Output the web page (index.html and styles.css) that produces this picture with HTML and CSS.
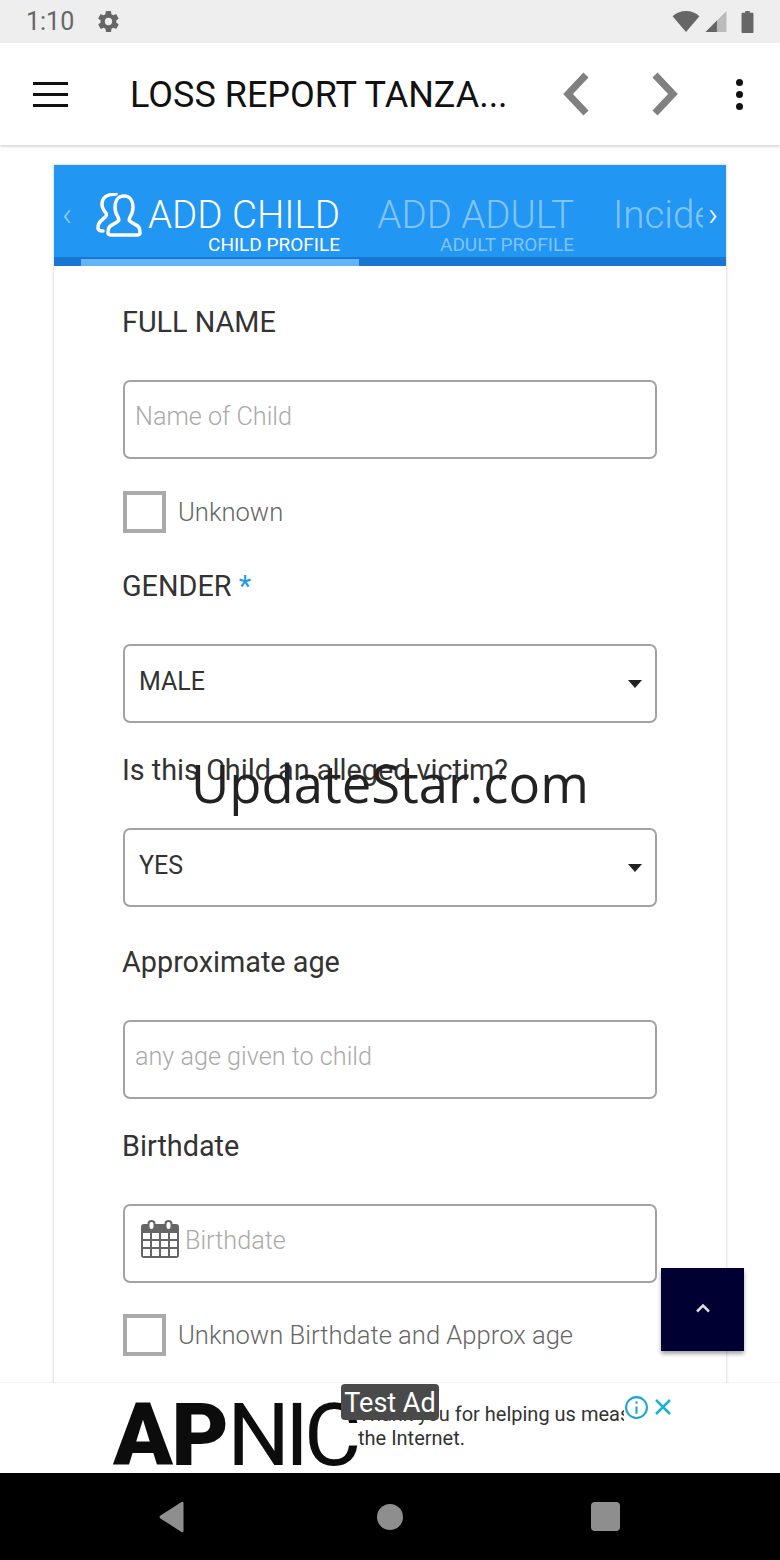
FILE: index.html
```html
<!DOCTYPE html>
<html lang="en">
<head>
<meta charset="utf-8">
<title>Loss Report Tanzania</title>
<link rel="stylesheet" href="styles.css">
</head>
<body>
<div class="screen">
  <header class="status">
    <div class="status-left">
      <span class="clock">1:10</span>
      <svg class="gear" viewBox="0 0 24 24"><path d="M19.4 13c.1-.3.1-.7.1-1s0-.7-.1-1l2.1-1.6c.2-.2.2-.4.1-.6l-2-3.5c-.1-.2-.4-.3-.6-.2l-2.5 1c-.5-.4-1.100-.7-1.700-1L14.400 2.400c0-.2-.2-.4-.5-.4h-4c-.2 0-.5.2-.5.400L9 5.100c-.6.2-1.100.6-1.700 1l-2.500-1c-.2-.1-.5 0-.6.200l-2 3.500c-.1.2-.1.500.1.600L4.500 11c0 .3-.1.700-.1 1s0 .7.1 1l-2.100 1.600c-.2.200-.2.400-.1.600l2 3.500c.1.200.4.300.6.200l2.500-1c.5.400 1.100.700 1.700 1l.4 2.700c0 .2.200.4.500.4h4c.2 0 .5-.2.5-.4l.4-2.700c.6-.2 1.100-.6 1.700-1l2.500 1c.2.100.5 0 .6-.2l2-3.500c.1-.2.100-.4-.1-.6zM12 15.500a3.500 3.500 0 1 1 0-7 3.500 3.500 0 0 1 0 7z"/></svg>
    </div>
    <div class="status-right">
      <svg class="wifi" viewBox="0 0 28 24"><path d="M0 6.500C3.500 3 8.500 1 14 1s10.500 2 14 5.500L14 23z"/></svg>
      <svg class="signal" viewBox="0 0 22 22"><path class="signal-back" d="M22 0v22H0z"/><path d="M12 10v12H0z"/></svg>
      <svg class="battery" viewBox="0 0 13 24"><path d="M4 0h5v2h3a1 1 0 0 1 1 1v20a1 1 0 0 1-1 1H1a1 1 0 0 1-1-1V3a1 1 0 0 1 1-1h3z"/></svg>
    </div>
  </header>

  <nav class="appbar">
    <button class="burger" aria-label="Menu"><span></span><span></span><span></span></button>
    <h1 class="title">LOSS REPORT TANZA...</h1>
    <svg class="arrow arrow-prev" viewBox="0 0 30 44"><path d="M25 3 7 22l18 19"/></svg>
    <svg class="arrow arrow-next" viewBox="0 0 30 44"><path d="M5 3l18 19L5 41"/></svg>
    <div class="kebab"><span></span><span></span><span></span></div>
  </nav>

  <main class="content">
    <section class="card">
      <div class="tabs">
        <span class="tab-chevron tab-chevron-left">‹</span>
        <div class="tab tab-active">
          <div class="tab-head">
            <svg class="tab-icon" viewBox="0 0 46 44"><path d="M28 3c-6 0-9 5-9 11 0 4 1 7 3 10 1 2 1 4-1 5l-5 3c-3 1-4 4-4 8 0 1 1 2 2 2h28c1 0 2-1 2-2 0-4-1-7-4-8l-5-3c-2-1-2-3-1-5 2-3 3-6 3-10 0-6-3-11-9-11z"/><path d="M20 1c-9 0-14 4-14 10 0 4 2 7 4 9 1 2 0 4-2 5l-2 2c-3 2-4 5-4 8 0 2 2 3 5 3"/></svg>
            <span class="tab-title">ADD CHILD</span>
          </div>
          <div class="tab-sub">CHILD PROFILE</div>
        </div>
        <div class="tab tab-adult">
          <div class="tab-head"><span class="tab-title">ADD ADULT</span></div>
          <div class="tab-sub">ADULT PROFILE</div>
        </div>
        <div class="tab tab-incident">
          <div class="tab-head"><span class="tab-title">Incident</span></div>
        </div>
        <span class="tab-chevron tab-chevron-right">›</span>
        <div class="tab-track"><div class="tab-indicator"></div></div>
      </div>

      <form class="form">
        <label class="label label-first">FULL NAME</label>
        <div class="input placeholder">Name of Child</div>
        <div class="check check-a"><span class="box"></span><span class="check-text">Unknown</span></div>

        <label class="label label-gender">GENDER <span class="req">*</span></label>
        <div class="input select"><span>MALE</span><i class="caret"></i></div>

        <label class="label label-near">Is this Child an alleged victim?</label>
        <div class="input select"><span>YES</span><i class="caret"></i></div>

        <label class="label label-far">Approximate age</label>
        <div class="input placeholder">any age given to child</div>

        <label class="label label-near">Birthdate</label>
        <div class="input placeholder date">
          <svg class="cal" viewBox="0 0 38 38"><path fill-rule="evenodd" d="M3 4h32a3 3 0 0 1 3 3v28a3 3 0 0 1-3 3H3a3 3 0 0 1-3-3V7a3 3 0 0 1 3-3zM2 13v6h7v-6zm9 0v6h7v-6zm9 0v6h7v-6zm9 0v6h7v-6zM2 21v6h7v-6zm9 0v6h7v-6zm9 0v6h7v-6zm9 0v6h7v-6zM2 29v7h7v-7zm9 0v7h7v-7zm9 0v7h7v-7zm9 0v7h7v-7z"/><rect class="cal-ring" x="7.500" y="1" width="6" height="9" rx="3"/><rect class="cal-ring" x="24.500" y="1" width="6" height="9" rx="3"/></svg>
          Birthdate
        </div>
        <div class="check check-b"><span class="box"></span><span class="check-text">Unknown Birthdate and Approx age</span></div>
      </form>
    </section>
    <div class="watermark">UpdateStar.com</div>
    <button class="to-top" aria-label="Back to top"><svg viewBox="0 0 16 10"><path d="M2 8.500l6-6 6 6"/></svg></button>
  </main>

  <aside class="ad">
    <div class="ad-logo"><b>AP</b><span>NIC</span></div>
    <div class="ad-text">Thank you for helping us measure<br>the Internet.</div>
    <div class="ad-badge">Test Ad</div>
    <svg class="ad-info" viewBox="0 0 24 24"><circle cx="12" cy="12" r="10"/><path d="M12 11v7M12 6v2.500"/></svg>
    <svg class="ad-close" viewBox="0 0 18 18"><path d="M2 2l14 14M16 2 2 16"/></svg>
  </aside>

  <footer class="navbar">
    <svg class="nav-back" viewBox="0 0 26 32"><path d="M25 2v28q0 2-2 1L2 17.500q-2-1.500 0-3L23 1q2-1 2 1z"/></svg>
    <span class="nav-home"></span>
    <span class="nav-recent"></span>
  </footer>
</div>
</body>
</html>
```
FILE: styles.css
```css
* { box-sizing: border-box; }
html, body { margin: 0; padding: 0; background: #fff; }
body { font-family: Roboto, "Noto Sans", sans-serif; }

.screen { width: 780px; height: 1560px; display: flex; flex-direction: column; overflow: hidden; position: relative; }

.status { height: 43px; flex: none; background: #eeeeee; display: flex; justify-content: space-between; align-items: center; padding: 0 26px; }
.status-left, .status-right { display: flex; align-items: center; }
.clock { font-size: 25px; color: #666; width: 70px; }
.gear { width: 25px; height: 25px; fill: #666; }
.wifi { width: 28px; height: 23px; fill: #666; }
.signal { width: 22px; height: 21px; fill: #666; margin-left: 5px; }
.signal-back { fill: #bbb; }
.battery { width: 13px; height: 22px; fill: #666; margin-left: 14px; }

.appbar { height: 102px; flex: none; background: #fff; display: flex; align-items: center; box-shadow: 0 2px 2px rgba(0,0,0,.14); position: relative; z-index: 2; }
.burger { border: 0; background: none; padding: 0; margin: 0 0 0 33px; width: 35px; display: flex; flex-direction: column; gap: 8px; }
.burger span { display: block; height: 3px; background: #111; }
.title { margin: 2px 0 0 62px; width: 433px; font-size: 36px; font-weight: 400; color: #111; white-space: nowrap; }
.arrow { width: 30px; height: 44px; fill: none; stroke: #808080; stroke-width: 7; }
.arrow-prev { margin-left: -2px; }
.arrow-next { margin-left: 59px; }
.kebab { display: flex; flex-direction: column; gap: 5px; margin-left: 56px; }
.kebab span { width: 7px; height: 7px; border-radius: 50%; background: #111; }

.content { flex: 1; min-height: 0; position: relative; padding: 20px 54px 0; background: #fff; overflow: hidden; }
.card { background: #fff; box-shadow: 0 0 3px rgba(0,0,0,.22); min-height: 1300px; }

.tabs { height: 101px; background: #2196f3; position: relative; display: flex; overflow: hidden; color: #fff; }
.tab { flex: none; display: flex; flex-direction: column; align-items: flex-end; padding-top: 28px; }
.tab-active { width: 242px; margin-left: 44px; }
.tab-adult { width: 195px; margin-left: 39px; color: rgba(255,255,255,.45); }
.tab-incident { width: 90px; margin-left: 39px; color: rgba(255,255,255,.45); overflow: hidden; align-items: flex-start; }
.tab-head { display: flex; align-items: center; height: 44px; }
.tab-title { font-size: 38.500px; line-height: 44px; font-weight: 300; white-space: nowrap; }
.tab-icon { width: 46px; height: 44px; fill: none; stroke: #fff; stroke-width: 3.5; margin-right: 6px; stroke-linejoin: round; stroke-linecap: round; }
.tab-sub { font-size: 19px; line-height: 20px; margin-top: -2px; white-space: nowrap; }
.tab-chevron { position: absolute; top: 29px; font-size: 34px; line-height: 40px; font-weight: 300; }
.tab-chevron-left { left: 8px; color: rgba(255,255,255,.5); }
.tab-chevron-right { left: 654px; width: 18px; }
.tab-track { position: absolute; left: 0; right: 0; bottom: 0; height: 9px; background: #1976d2; }
.tab-indicator { position: absolute; left: 27px; width: 278px; top: 2px; bottom: 0; background: #64b5f6; }

.form { display: flex; flex-direction: column; padding: 0 69px; }
.label { display: block; font-size: 28.800px; line-height: 40px; color: #333; white-space: nowrap; margin-bottom: 38px; margin-left: -1px; }
.label-first { margin-top: 36px; }
.label-gender { margin-top: 33px; }
.label-near { margin-top: 27px; }
.label-far { margin-top: 35px; }
.req { color: #2196f3; }
.input { height: 79px; border: 2px solid #a3a3a3; border-radius: 7px; display: flex; align-items: center; padding: 0 14px; font-size: 25px; color: #333; }
.placeholder { padding: 0 10px 6px; color: #aaa; font-weight: 300; font-size: 25.200px; }
.select { justify-content: space-between; padding-bottom: 4px; font-weight: 400; }
.caret { width: 0; height: 0; border: 7px solid transparent; border-top: 8px solid #222; border-bottom: 0; margin: 4px -1px 0 0; }
.date { padding-left: 16px; gap: 6px; }
.cal { width: 38px; height: 38px; fill: #666; margin-bottom: 3px; }
.cal-ring { fill: #fff; stroke: #666; stroke-width: 2; }
.check { display: flex; align-items: center; gap: 12px; }
.check-a { margin-top: 32px; }
.check-b { margin-top: 31px; }
.box { width: 43px; height: 42px; border: 4px solid #aaa; flex: none; }
.check-text { font-size: 25.600px; color: #666; font-weight: 300; white-space: nowrap; }

.watermark { position: absolute; left: 191px; top: 603px; font-size: 52.600px; line-height: 70px; color: #222; font-family: "Open Sans", sans-serif; white-space: nowrap; }
.to-top { position: absolute; left: 661px; top: 1123px; width: 83px; height: 83px; border: 0; padding: 0; background: #000033; box-shadow: 0 3px 4px rgba(0,0,0,.35); display: flex; align-items: center; justify-content: center; }
.to-top svg { width: 16px; height: 10px; fill: none; stroke: #ddd; stroke-width: 2.5; margin-bottom: 4px; }

.ad { height: 90px; flex: none; background: #fff; position: relative; overflow: hidden; box-shadow: 0 -1px 1px rgba(0,0,0,.04); z-index: 3; }
.ad-logo { position: absolute; left: 113px; top: 7px; font-size: 88px; line-height: 90px; color: #0c0c0c; white-space: nowrap; }
.ad-logo b { font-weight: 900; letter-spacing: -1.500px; }
.ad-logo span { font-weight: 400; letter-spacing: -5px; }
.ad-text { position: absolute; left: 358px; top: 19px; width: 266px; overflow: hidden; white-space: nowrap; font-size: 20px; line-height: 24px; color: #333; }
.ad-badge { position: absolute; left: 341px; top: 1px; width: 98px; height: 36px; border-radius: 4px; background: #4a4a4a; color: #fff; font-size: 27px; line-height: 39px; text-align: center; white-space: nowrap; }
.ad-info { position: absolute; left: 624px; top: 12px; width: 25px; height: 25px; fill: none; stroke: #1ba5d0; stroke-width: 2; }
.ad-close { position: absolute; left: 654px; top: 15px; width: 18px; height: 18px; fill: none; stroke: #19b2d6; stroke-width: 2.500; }

.navbar { height: 87px; flex: none; background: #000; display: flex; align-items: center; padding: 0 0 0 158px; }
.nav-back { width: 27px; height: 32px; fill: #8e8e8e; }
.nav-home { width: 26px; height: 26px; border-radius: 50%; background: #8e8e8e; margin-left: 192px; }
.nav-recent { width: 29px; height: 29px; border-radius: 4px; background: #8e8e8e; margin-left: 188px; }
```
